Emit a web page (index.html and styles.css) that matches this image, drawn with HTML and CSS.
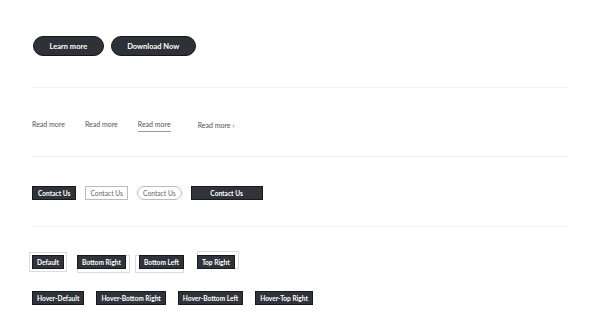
FILE: index.html
```html
<!DOCTYPE html>
<html lang="en">
<head>
  <meta charset="UTF-8" />
  <title>Buttons</title>
  <link rel="stylesheet" href="styles.css">
</head>
<body>
  <main class="page">

    <!-- pill buttons -->
    <section class="row row-pills">
      <a class="btn-pill">Learn more</a>
      <a class="btn-pill">Download Now</a>
    </section>

    <!-- text links -->
    <section class="row row-links">
      <a class="link">Read more</a>
      <a class="link">Read more</a>
      <a class="link link-underline">Read more</a>
      <a class="link">Read more <span class="chev">&#8250;</span></a>
    </section>

    <!-- contact buttons -->
    <section class="row row-contact">
      <a class="btn-sq btn-dark">Contact Us</a>
      <a class="btn-sq btn-outline">Contact Us</a>
      <a class="btn-sq btn-outline btn-round">Contact Us</a>
      <a class="btn-sq btn-dark btn-wide">Contact Us</a>
    </section>

    <!-- shadow buttons -->
    <section class="row-shadow">
      <div class="shadow-line">
        <a class="btn-sq btn-dark sh sh-default">Default</a>
        <a class="btn-sq btn-dark sh sh-br">Bottom Right</a>
        <a class="btn-sq btn-dark sh sh-bl">Bottom Left</a>
        <a class="btn-sq btn-dark sh sh-tr">Top Right</a>
      </div>
      <div class="shadow-line hover-line">
        <a class="btn-sq btn-dark">Hover-Default</a>
        <a class="btn-sq btn-dark">Hover-Bottom Right</a>
        <a class="btn-sq btn-dark">Hover-Bottom Left</a>
        <a class="btn-sq btn-dark">Hover-Top Right</a>
      </div>
    </section>

  </main>
</body>
</html>
```

FILE: styles.css
```css
* {
  margin: 0;
  padding: 0;
  box-sizing: border-box;
  font-family: 'Lato', 'Liberation Sans', sans-serif;
}

body {
  background: #ffffff;
  color: #2f3238;
}

.page {
  padding: 0 32px;
}

a {
  text-decoration: none;
  cursor: pointer;
}

.row {
  display: flex;
  align-items: center;
  border-bottom: 1px solid #f3f3f3;
}

/* pills */
.row-pills {
  gap: 7px;
  padding: 36px 1px 31px;
}

.btn-pill {
  display: inline-flex;
  align-items: center;
  justify-content: center;
  height: 20px;
  padding: 0 15.5px;
  border-radius: 10px;
  background: #2e3238;
  border: 1px solid #15171a;
  color: #fff;
  font-size: 7.5px;
  font-weight: 700;
}

/* links */
.row-links {
  padding: 32px 0 0;
  align-items: flex-start;
  height: 69px;
}

.link {
  font-size: 7px;
  color: #555;
  padding-bottom: 3px;
  margin-right: 20px;
  border-bottom: 1px solid transparent;
}

.link-underline {
  border-bottom-color: #999;
  margin-right: 27px;
}

.chev {
  font-size: 8px;
}

/* contact */
.row-contact {
  gap: 9px;
  height: 70px;
  padding-top: 3px;
}

.btn-sq {
  display: inline-flex;
  align-items: center;
  justify-content: center;
  height: 14px;
  padding: 0 4px;
  font-size: 6.6px;
  white-space: nowrap;
}

.btn-dark {
  background: #30333a;
  border: 1px solid #17191c;
  color: #fff;
  font-weight: 700;
}

.row-contact .btn-dark {
  padding: 0 5px;
}

.btn-outline {
  background: #fff;
  border: 1px solid #bcbcbc;
  color: #666;
  font-size: 6.7px;
}

.row-contact .btn-round {
  border-radius: 8px;
  padding: 0 5px;
}

.row-contact .btn-wide {
  width: 72px;
}

/* shadows */
.row-shadow {
  padding-top: 28px;
}

.shadow-line {
  display: flex;
  gap: 13px;
  height: 14px;
}

.hover-line {
  margin-top: 22px;
  gap: 12px;
}

.sh-default {
  box-shadow: 0 0 0 2px #fff, 0 0 0 3px #dcdcdc;
}

.sh-br {
  box-shadow: 2px 2px 0 1px #fff, 2px 2px 0 2px #dcdcdc;
}

.sh-bl {
  box-shadow: -2px 2px 0 1px #fff, -2px 2px 0 2px #dcdcdc;
}

.sh-tr {
  box-shadow: 2px -2px 0 1px #fff, 2px -2px 0 2px #dcdcdc;
}
```
